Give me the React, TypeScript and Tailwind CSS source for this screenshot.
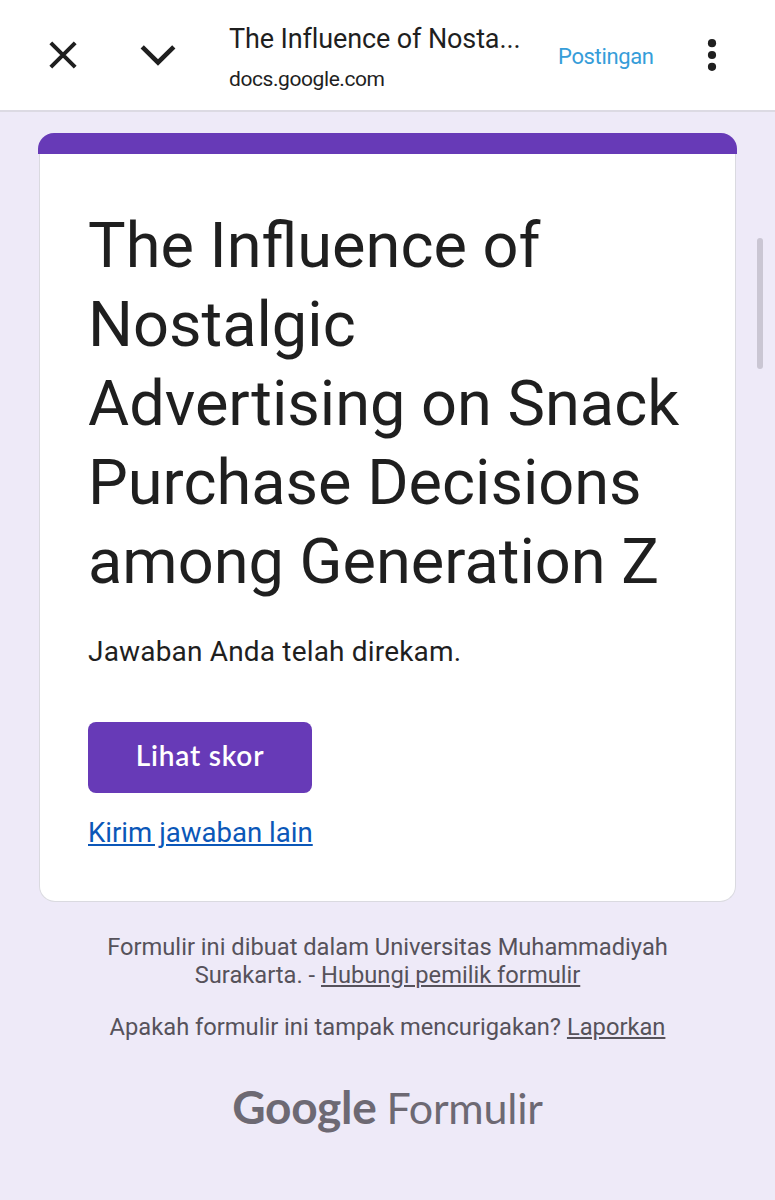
const titleLines = [
  "The Influence of",
  "Nostalgic",
  "Advertising on Snack",
  "Purchase Decisions",
  "among Generation Z",
];

const BrowserBar = () => {
  return (
    <header className="h-28 shrink-0 flex items-center bg-white border-b-2 border-[#dcdae3]">
      <button aria-label="Close" className="ml-[49px] w-7 h-7 shrink-0">
        <svg width="28" height="28" viewBox="0 0 28 28" fill="none" stroke="#1f1f1f" strokeWidth="4">
          <path d="M1.8 1.8L26.2 26.2M26.2 1.8L1.8 26.2" />
        </svg>
      </button>
      <button aria-label="Minimize" className="ml-[63px] w-9 h-6 shrink-0">
        <svg width="36" height="24" viewBox="0 0 36 24" fill="none" stroke="#1f1f1f" strokeWidth="4.6">
          <path d="M2.2 3.8L18 19.4L33.8 3.8" />
        </svg>
      </button>
      <div className="ml-[53px] w-[300px] shrink-0 whitespace-nowrap text-[#1f1f1f] pt-[7px]">
        <div className="text-[27px] leading-[40px] tracking-[-0.12px]">The Influence of Nosta...</div>
        <div className="text-[21px] leading-[40px] tracking-[-0.42px]">docs.google.com</div>
      </div>
      <button className="ml-[29px] w-[96px] shrink-0 pt-[3px] text-left text-[22px] tracking-[-0.35px] text-[#369dd9] whitespace-nowrap">
        Postingan
      </button>
      <button aria-label="Menu" className="ml-[53px] shrink-0">
        <svg width="10" height="34" viewBox="0 0 10 34" fill="#1f1f1f">
          <circle cx="5" cy="5.2" r="4.1" />
          <circle cx="5" cy="17" r="4.1" />
          <circle cx="5" cy="28.8" r="4.1" />
        </svg>
      </button>
    </header>
  );
};

export default function App() {
  return (
    <div className="relative w-[775px] h-[1200px] overflow-hidden flex flex-col bg-[#eeeaf8] font-['Roboto',sans-serif]">
      <BrowserBar />
      <main className="mx-[38px] mt-[21px]">
        <section>
          <div className="h-[21px] rounded-t-[16px] bg-[#673ab7]" />
          <div className="mx-px h-[748px] px-[49px] pt-[52px] rounded-b-[16px] bg-white border-[1.5px] border-t-0 border-[#dadae0]">
            <h1 className="-ml-px text-[63.1px] leading-[79px] text-[#1f1f1f] whitespace-nowrap">
              {titleLines.map((line) => (
                <span key={line} className="block">{line}</span>
              ))}
            </h1>
            <p className="-ml-px mt-[31px] text-[28px] leading-[40px] tracking-[0.18px] text-[#1f1f1f]">
              Jawaban Anda telah direkam.
            </p>
            <button className="-ml-px block mt-[50px] w-[224px] h-[71px] pb-[5px] rounded-[8px] bg-[#673ab7] text-white font-['Lato',sans-serif] text-[28px] font-semibold tracking-[0.8px]">
              Lihat skor
            </button>
            <a className="-ml-px inline-block mt-[20px] text-[27.6px] leading-[40px] text-[#0b57b8] underline">
              Kirim jawaban lain
            </a>
          </div>
        </section>
        <footer className="text-center text-[23.7px] leading-[28px] text-[#56525b]">
          <p className="mt-[31px]">
            Formulir ini dibuat dalam Universitas Muhammadiyah
            <br />
            Surakarta. - <a className="underline">Hubungi pemilik formulir</a>
          </p>
          <p className="mt-6">
            Apakah formulir ini tampak mencurigakan? <a className="underline">Laporkan</a>
          </p>
        </footer>
        <div className="mt-[38px] flex justify-center items-baseline gap-2.5 font-['Lato',sans-serif] leading-[56px] text-[#6d6973]">
          <span className="text-[46px] font-bold tracking-[-0.3px]">Google</span>
          <span className="text-[43px] tracking-[-0.2px]">Formulir</span>
        </div>
      </main>
      <div className="absolute right-3 top-[238px] w-[6px] h-[131px] rounded-full bg-[#cac6d3]" />
    </div>
  );
}
